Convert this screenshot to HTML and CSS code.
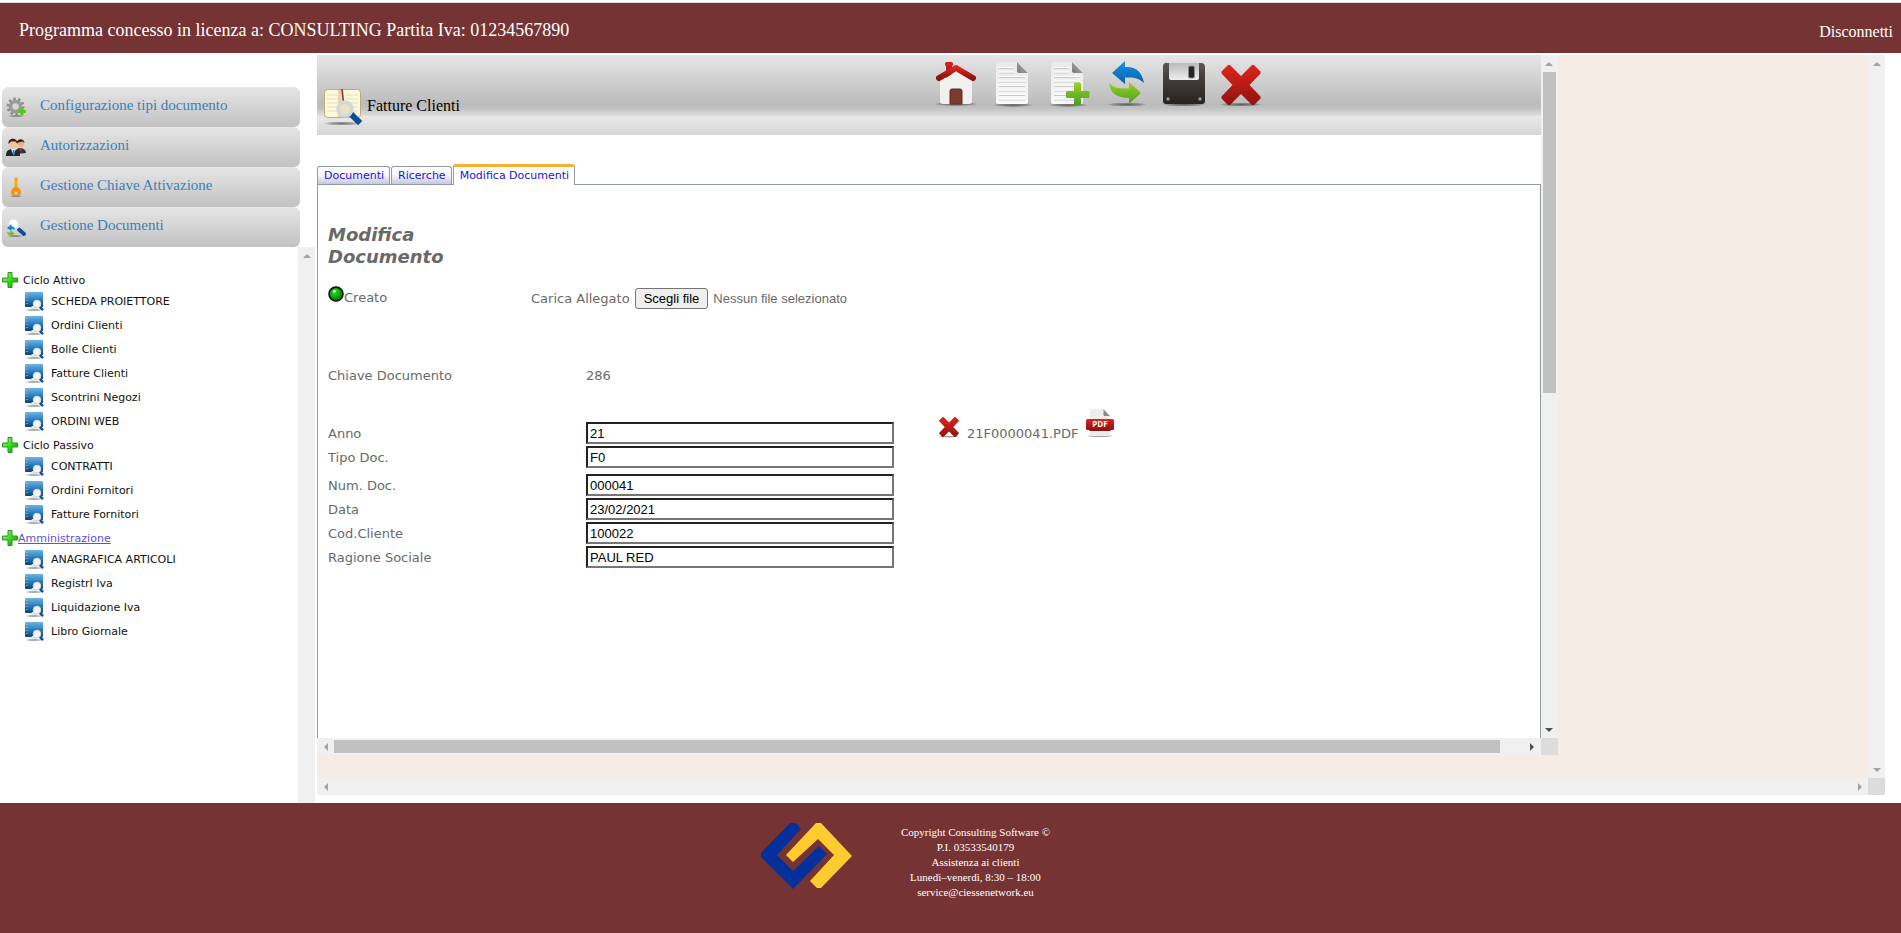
FILE: index.html
```html
<!DOCTYPE html>
<html lang="it">
<head>
<meta charset="utf-8">
<title>Fatture Clienti</title>
<link rel="stylesheet" href="styles.css">
</head>
<body>
<svg class="defs" width="0" height="0" aria-hidden="true">
  <defs>
    <linearGradient id="g-red" x1="0" y1="0" x2="0" y2="1"><stop offset="0" stop-color="#e0241c"/><stop offset="1" stop-color="#8c1410"/></linearGradient>
    <linearGradient id="g-redu" gradientUnits="userSpaceOnUse" x1="0" y1="4" x2="0" y2="40"><stop offset="0" stop-color="#e0281e"/><stop offset="1" stop-color="#841512"/></linearGradient>
    <linearGradient id="g-paper" x1="0" y1="0" x2="0" y2="1"><stop offset="0" stop-color="#e9e9e9"/><stop offset="1" stop-color="#f8f8f8"/></linearGradient>
    <linearGradient id="g-fold" x1="0" y1="1" x2="1" y2="0"><stop offset="0" stop-color="#777"/><stop offset="1" stop-color="#bbb"/></linearGradient>
    <linearGradient id="g-green" x1="0" y1="0" x2="0" y2="1"><stop offset="0" stop-color="#9bd31c"/><stop offset="1" stop-color="#4a9e2c"/></linearGradient>
    <linearGradient id="g-blue" x1="0" y1="0" x2="0" y2="1"><stop offset="0" stop-color="#1197e2"/><stop offset="1" stop-color="#0b5cab"/></linearGradient>
    <linearGradient id="g-screen" x1="0" y1="0" x2="0" y2="1"><stop offset="0" stop-color="#6db4e4"/><stop offset=".5" stop-color="#2b7fc0"/><stop offset="1" stop-color="#08407f"/></linearGradient>
    <linearGradient id="g-disk" x1="0" y1="0" x2="0" y2="1"><stop offset="0" stop-color="#5b5856"/><stop offset=".3" stop-color="#474341"/><stop offset="1" stop-color="#262220"/></linearGradient>
    <linearGradient id="g-label" x1="0" y1="0" x2="0" y2="1"><stop offset="0" stop-color="#b9b9b9"/><stop offset="1" stop-color="#efefef"/></linearGradient>
    <linearGradient id="g-plus" x1="0" y1="0" x2="1" y2="1"><stop offset="0" stop-color="#b6f4a0"/><stop offset=".5" stop-color="#38dc1c"/><stop offset="1" stop-color="#0a9a06"/></linearGradient>
    <radialGradient id="g-shadow"><stop offset="0" stop-color="#000" stop-opacity=".5"/><stop offset=".7" stop-color="#000" stop-opacity=".25"/><stop offset="1" stop-color="#000" stop-opacity="0"/></radialGradient>
    <radialGradient id="g-led" cx=".4" cy=".35"><stop offset="0" stop-color="#2fe02f"/><stop offset="1" stop-color="#029302"/></radialGradient>
  </defs>
  <symbol id="i-plus" viewBox="0 0 16 16"><path d="M6 .5h4V6h5.500v4H10v5.500H6V10H.5V6H6z" fill="url(#g-plus)" stroke="#2b9420"/></symbol>
  <symbol id="i-screen" viewBox="0 0 20 20">
    <ellipse cx="10" cy="19" rx="10" ry="1" fill="url(#g-shadow)"/>
    <rect x="1" y="1" width="18" height="15" rx="1" fill="url(#g-screen)"/>
    <path d="M3 3v11" stroke="#d8d090" stroke-dasharray="1 2"/>
    <path d="M8 15h5l1 3H6z" fill="#e4e4e4"/>
    <path d="M15.500 15.500l2.800 2.800" stroke="#0f4f9c" stroke-width="2.600" stroke-linecap="round"/>
    <circle cx="13" cy="13" r="3.800" fill="#f4f4f4" stroke="#d8d8d8"/>
  </symbol>
  <symbol id="i-cross" viewBox="0 0 44 46">
    <ellipse cx="22" cy="43.500" rx="22" ry="2" fill="url(#g-shadow)"/>
    <path d="M9 4h2l11 11L33 4h2l6.500 6.500v2L30.500 24l11 11.500v2L35 44h-2L22 33 11 44H9l-6.500-6.500v-2l11-11.500-11-11.500v-2z" fill="url(#g-red)"/>
  </symbol>
  <symbol id="i-page" viewBox="0 0 40 46">
    <ellipse cx="20" cy="44" rx="20" ry="2" fill="url(#g-shadow)"/>
    <path d="M5 1h20l10 11v29a2 2 0 0 1-2 2H5a2 2 0 0 1-2-2V3a2 2 0 0 1 2-2z" fill="url(#g-paper)"/>
    <path d="M24 1l11 11H26a2 2 0 0 1-2-2z" fill="url(#g-fold)"/>
    <path d="M6 7.500h15M6 12h15M6 16.500h26M6 21h26M6 25.500h26M6 30h26M6 34.500h26M6 39h26" stroke="#c9c9c9"/>
    <path d="M6 6.500h15M6 11h15M6 15.500h26M6 20h26M6 24.500h26M6 29h26M6 33.500h26M6 38h26" stroke="#fff"/>
  </symbol>
</svg>

<header class="top">
  <span class="top-licence">Programma concesso in licenza a: CONSULTING Partita Iva: 01234567890</span>
  <a class="top-logout" href="#">Disconnetti</a>
</header>

<div class="shell">
  <aside class="side">
    <nav class="menu">
      <a class="menu-item" href="#">
        <svg class="menu-icon" viewBox="0 0 20 20"><ellipse cx="10" cy="19" rx="9" ry="1" fill="url(#g-shadow)"/><circle cx="9.500" cy="9.500" r="7.500" fill="none" stroke="#8c8c8c" stroke-width="3" stroke-dasharray="2.400 2.310"/><circle cx="9.500" cy="9.500" r="5" fill="none" stroke="#999" stroke-width="3.500"/><path d="M12 14.500h8M16 10.500v8" stroke="#5cc41a" stroke-width="3"/></svg>
        <span>Configurazione tipi documento</span></a>
      <a class="menu-item" href="#">
        <svg class="menu-icon" viewBox="0 0 20 20"><path d="M10 17c0-4 1-6 4-6s6 2 6 5z" fill="#333"/><circle cx="14.500" cy="6.500" r="3.500" fill="#e9b68c"/><path d="M10.500 6c0-4 7.500-6 8 0l-2-1.500z" fill="#40210f"/><path d="M13.500 11h2.500l-1 4z" fill="#d22"/><path d="M0 19c0-5 2-7 7-7s7 2 7 7z" fill="#24262b"/><path d="M5 12h5l-2.500 6z" fill="#e8f2fa"/><path d="M7 13h1.500l.5 4-1 1-1.200-1z" fill="#1b8ad4"/><circle cx="7" cy="7.500" r="4" fill="#f2c49b"/><path d="M2.500 7c-1-7 9.500-7 9 0l-2-2.500H5z" fill="#40210f"/></svg>
        <span>Autorizzazioni</span></a>
      <a class="menu-item" href="#">
        <svg class="menu-icon" viewBox="0 0 20 20"><ellipse cx="10" cy="19" rx="7" ry="1" fill="url(#g-shadow)"/><path d="M8.500 1L10 0l1.500 1v10h-3z" fill="#f7a81c"/><path d="M10 10c3 0 5 3 5 5.500S13 19 10 19s-5-1-5-3.500S7 10 10 10z" fill="#f39016"/><circle cx="10" cy="16" r="1.500" fill="#e9dcc8"/></svg>
        <span>Gestione Chiave Attivazione</span></a>
      <a class="menu-item" href="#">
        <svg class="menu-icon" viewBox="0 0 20 20"><ellipse cx="9" cy="19" rx="9" ry="1" fill="url(#g-shadow)"/><path d="M13 12.500l5 4.500" stroke="#0f4f9c" stroke-width="3.800" stroke-linecap="round"/><circle cx="7.500" cy="7" r="5.500" fill="#fff" stroke="#dedede" stroke-width="2"/><path d="M1 11l4.500-4v2.500C8 9.500 9 11 9 13c-1-1-2-1-3.500-1v2z" fill="#1583cf"/><path d="M8.500 16.500L4.500 20v-2C2 18 1 17 1 14.500c1 1 2 1 3.500 1v-2z" fill="#6fbd2b"/></svg>
        <span>Gestione Documenti</span></a>
    </nav>
    <div class="tree-wrap">
      <ul class="tree">
        <li class="tree-group"><svg class="tree-plus"><use href="#i-plus"/></svg><span class="tree-title">Ciclo Attivo</span></li>
        <li class="tree-leaf"><svg class="tree-icon"><use href="#i-screen"/></svg>SCHEDA PROIETTORE</li>
        <li class="tree-leaf"><svg class="tree-icon"><use href="#i-screen"/></svg>Ordini Clienti</li>
        <li class="tree-leaf"><svg class="tree-icon"><use href="#i-screen"/></svg>Bolle Clienti</li>
        <li class="tree-leaf"><svg class="tree-icon"><use href="#i-screen"/></svg>Fatture Clienti</li>
        <li class="tree-leaf"><svg class="tree-icon"><use href="#i-screen"/></svg>Scontrini Negozi</li>
        <li class="tree-leaf"><svg class="tree-icon"><use href="#i-screen"/></svg>ORDINI WEB</li>
        <li class="tree-group"><svg class="tree-plus"><use href="#i-plus"/></svg><span class="tree-title">Ciclo Passivo</span></li>
        <li class="tree-leaf"><svg class="tree-icon"><use href="#i-screen"/></svg>CONTRATTI</li>
        <li class="tree-leaf"><svg class="tree-icon"><use href="#i-screen"/></svg>Ordini Fornitori</li>
        <li class="tree-leaf"><svg class="tree-icon"><use href="#i-screen"/></svg>Fatture Fornitori</li>
        <li class="tree-group"><svg class="tree-plus"><use href="#i-plus"/></svg><a class="tree-link" href="#">Amministrazione</a></li>
        <li class="tree-leaf"><svg class="tree-icon"><use href="#i-screen"/></svg>ANAGRAFICA ARTICOLI</li>
        <li class="tree-leaf"><svg class="tree-icon"><use href="#i-screen"/></svg>RegistrI Iva</li>
        <li class="tree-leaf"><svg class="tree-icon"><use href="#i-screen"/></svg>Liquidazione Iva</li>
        <li class="tree-leaf"><svg class="tree-icon"><use href="#i-screen"/></svg>Libro Giornale</li>
      </ul>
      <div class="bar-v"><span class="arrow up"></span></div>
    </div>
  </aside>

  <main class="outer">
    <div class="outer-view">
      <section class="inner">
        <div class="page">
          <div class="toolbar">
            <div class="toolbar-title">
              <svg class="title-icon" viewBox="0 0 40 38"><ellipse cx="19" cy="35.500" rx="19" ry="2" fill="url(#g-shadow)"/><rect x="1.500" y="1.500" width="36" height="28" rx="3" fill="#fbf8dc" stroke="#b9ac7c"/><path d="M15 2h5v27h-5z" fill="#ddd8bc"/><path d="M4 7h11M4 11h11M4 15h11M4 19h9M4 23h10M23 7h12M23 11h12M27 15h8M30 19h5M30 23h5" stroke="#e6e0bd"/><path d="M19 1l1.500 13" stroke="#b02a20" stroke-width="1.600"/><path d="M30 28l5 5" stroke="#0d4c97" stroke-width="6" stroke-linecap="square"/><circle cx="22" cy="21" r="7" fill="#e6e2c4" stroke="#d6d6d6" stroke-width="3.500"/></svg>
              <span>Fatture Clienti</span>
            </div>
            <div class="tools">
              <button class="tool" aria-label="Home"><svg viewBox="0 0 44 46"><ellipse cx="22" cy="43" rx="22" ry="2.200" fill="url(#g-shadow)"/><path d="M6 20L22 9l16 11v20a3 3 0 0 1-3 3H9a3 3 0 0 1-3-3z" fill="#f1f0ef"/><path d="M16 43V30a2 2 0 0 1 2-2h8a2 2 0 0 1 2 2v13z" fill="#7a3a30" stroke="#5a2c26"/><path d="M12 4h6v9l-6 4z" fill="#b81d18"/><rect x="11" y="1" width="8" height="4" rx="1.500" fill="#d2231d"/><path d="M5 17L22 7l17 10" fill="none" stroke="url(#g-red)" stroke-width="6" stroke-linecap="round" stroke-linejoin="round"/></svg></button>
              <button class="tool" aria-label="Documento"><svg viewBox="0 0 40 46"><use href="#i-page"/></svg></button>
              <button class="tool" aria-label="Nuovo documento"><svg viewBox="0 0 44 46"><use href="#i-page" width="40" height="46"/><path d="M26 23a1.500 1.500 0 0 1 1.500-1.500h4A1.500 1.500 0 0 1 33 23v7h7a1.500 1.500 0 0 1 1.500 1.500v4A1.500 1.500 0 0 1 40 37h-7v5.500a1.500 1.500 0 0 1-1.500 1.500h-4a1.500 1.500 0 0 1-1.500-1.500V37h-6.500a1.500 1.500 0 0 1-1.500-1.500v-4a1.500 1.500 0 0 1 1.500-1.500H26z" fill="url(#g-green)"/></svg></button>
              <button class="tool" aria-label="Aggiorna"><svg viewBox="0 0 44 46"><ellipse cx="22" cy="43.500" rx="20" ry="2" fill="url(#g-shadow)"/><path d="M7 12L20 0v6c10-1 17 4 19 16-5-5-10-6-19-5.500V23z" fill="url(#g-blue)"/><path d="M36 32L24 43v-6C12 37 5 32 4 22c5 5 11 6 20 5.500V21z" fill="url(#g-green)"/></svg></button>
              <button class="tool" aria-label="Salva"><svg viewBox="0 0 44 46"><ellipse cx="22" cy="43.500" rx="22" ry="2" fill="url(#g-shadow)"/><path d="M5 2h34a4 4 0 0 1 4 4v34a3 3 0 0 1-3 3H4a3 3 0 0 1-3-3V5a3 3 0 0 1 4-3z" fill="url(#g-disk)"/><path d="M7 2h30v15a2 2 0 0 1-2 2H9a2 2 0 0 1-2-2z" fill="url(#g-label)"/><rect x="26.500" y="5" width="6" height="12" rx="1.500" fill="#292522" stroke="#8d8d8d"/><circle cx="6" cy="38" r="1.700" fill="#9a9796"/><circle cx="38" cy="38" r="1.700" fill="#9a9796"/></svg></button>
              <button class="tool" aria-label="Elimina"><svg viewBox="0 0 44 46"><use href="#i-cross"/></svg></button>
            </div>
          </div>

          <nav class="tabs">
            <a class="tab" href="#">Documenti</a>
            <a class="tab" href="#">Ricerche</a>
            <a class="tab tab-active" href="#">Modifica Documenti</a>
          </nav>

          <form class="sheet">
            <h1 class="sheet-title">Modifica Documento</h1>
            <div class="status-row">
              <span class="status"><svg class="led" viewBox="0 0 15 15"><circle cx="7.500" cy="7.500" r="6.500" fill="url(#g-led)" stroke="#061806" stroke-width="1.600"/><circle cx="6" cy="5" r="1.200" fill="#e8ffd8"/></svg>Creato</span>
              <span class="upload">
                <label for="allegato">Carica Allegato</label>
                <input class="upload-input" type="file" id="allegato" tabindex="-1">
                <button class="upload-button" type="button">Scegli file</button>
                <span class="upload-name">Nessun file selezionato</span>
              </span>
            </div>
            <div class="row row-key"><span>Chiave Documento</span><span>286</span></div>
            <div class="fields">
              <div class="row">
                <label for="anno">Anno</label><input class="field" id="anno" value="21">
                <span class="attachment">
                  <button class="attachment-remove" type="button" aria-label="Rimuovi allegato"><svg viewBox="0 0 44 46"><use href="#i-cross"/></svg></button>
                  <span>21F0000041.PDF</span>
                  <svg class="attachment-pdf" viewBox="0 0 30 30"><ellipse cx="15" cy="28" rx="14" ry="1.500" fill="url(#g-shadow)"/><path d="M5 1h14l6 7v19a1 1 0 0 1-1 1H6a1 1 0 0 1-1-1z" fill="#ededed"/><path d="M18.500 1L25 8h-5a1.500 1.500 0 0 1-1.500-1.500z" fill="url(#g-fold)"/><path d="M3 21h24l-2 2H5z" fill="#8a1512"/><rect x="1" y="11" width="28" height="11" rx="1.500" fill="url(#g-red)"/><text class="pdf-text" x="15" y="19" text-anchor="middle">PDF</text></svg>
                </span>
              </div>
              <div class="row"><label for="tipo">Tipo Doc.</label><input class="field" id="tipo" value="F0"></div>
              <div class="row row-spaced"><label for="num">Num. Doc.</label><input class="field" id="num" value="000041"></div>
              <div class="row"><label for="data">Data</label><input class="field" id="data" value="23/02/2021"></div>
              <div class="row"><label for="cod">Cod.Cliente</label><input class="field" id="cod" value="100022"></div>
              <div class="row"><label for="ragione">Ragione Sociale</label><input class="field" id="ragione" value="PAUL RED"></div>
            </div>
          </form>
        </div>
        <div class="bar-v"><span class="arrow up"></span><span class="track-v"><span class="thumb-v"></span></span><span class="arrow down dark"></span></div>
        <div class="bar-h"><span class="arrow left"></span><span class="track-h"><span class="thumb-h"></span></span><span class="arrow right dark"></span></div>
        <div class="corner"></div>
      </section>
    </div>
    <div class="bar-v"><span class="arrow up"></span><span class="track-v"></span><span class="arrow down"></span></div>
    <div class="bar-h"><span class="arrow left"></span><span class="track-h"></span><span class="arrow right"></span></div>
    <div class="corner"></div>
  </main>
</div>

<footer class="foot">
  <svg class="logo" viewBox="0 0 91 66"><path d="M29 0h6l5 6-24 26 16 16 26-25 8 8-34 35L0 34v-4z" fill="#03309a"/><path d="M55 0h5l31 33-31 32h-4l-7-7 24-26-16-16-25 23-7-7z" fill="#ffcb2f"/></svg>
  <p class="foot-text">Copyright Consulting Software ©<br>P.I. 03533540179<br>Assistenza ai clienti<br>Lunedì–venerdì, 8:30 – 18:00<br>service@ciessenetwork.eu</p>
</footer>
</body>
</html>
```
FILE: styles.css
```css
* { box-sizing: border-box; }

body {
  margin: 0;
  min-height: 100vh;
  display: flex;
  flex-direction: column;
  background: #fff;
  color: #000;
  font-family: "Liberation Serif", "Times New Roman", serif;
  font-size: 16px;
}

a { text-decoration: none; }
button { padding: 0; border: 0; background: none; }
.defs { display: block; position: absolute; }

/* Header */
.top {
  display: flex;
  justify-content: space-between;
  align-items: center;
  height: 51px;
  margin-top: 2px;
  padding: 5px 8px 0 19px;
  border-top: 1px solid #dcdcdc;
  background: #763334;
  color: #fff;
}
.top-licence { font-size: 18px; }
.top-logout { color: #fff; font-size: 16px; padding-top: 2px; }

.shell { flex: 1; display: flex; }

/* Sidebar */
.side {
  width: 317px;
  flex: none;
  display: flex;
  flex-direction: column;
  padding: 34px 2px 0;
}
.menu { width: 298px; }
.menu-item {
  display: flex;
  align-items: center;
  height: 40px;
  padding-left: 4px;
  gap: 14px;
  border-radius: 6px;
  background: linear-gradient(#e6e6e6, #c2c2c2);
  color: #3c7fb8;
  font-size: 15px;
}
.menu-item span { padding-bottom: 3px; }
.menu-icon { width: 20px; height: 20px; flex: none; }

.tree-wrap { flex: 1; display: flex; justify-content: space-between; }
.tree {
  margin: 0;
  padding: 21px 0 0;
  list-style: none;
  font-family: "DejaVu Sans", Verdana, sans-serif;
  font-size: 11px;
  color: #111;
}
.tree-group { display: flex; align-items: center; height: 21px; padding-top: 3px; }
.tree-plus { width: 16px; height: 16px; flex: none; }
.tree-title { padding-left: 5px; }
.tree-link { color: #5a50e0; text-decoration: underline; }
.tree-leaf { display: flex; align-items: center; height: 24px; gap: 7px; padding-left: 22px; }
.tree-icon { width: 20px; height: 20px; flex: none; }

/* Scrollbars */
.bar-v {
  width: 17px;
  flex: none;
  display: flex;
  flex-direction: column;
  align-items: center;
  background: #f0f0f0;
}
.bar-h { height: 17px; display: flex; align-items: center; background: #f0f0f0; }
.corner { background: #dcdcdc; }
.track-v { flex: 1; width: 13px; }
.track-h { flex: 1; height: 13px; }
.thumb-v { display: block; height: 49.5%; background: #c1c1c1; }
.thumb-h { display: block; width: 98%; height: 100%; background: #c1c1c1; }
.arrow { width: 17px; height: 17px; flex: none; display: grid; place-items: center; color: #a3a3a3; }
.arrow::before { content: ""; border: 4px solid transparent; }
.arrow.up::before { border-top: 0; border-bottom-color: currentColor; }
.arrow.down::before { border-bottom: 0; border-top-color: currentColor; }
.arrow.left::before { border-left: 0; border-right-color: currentColor; }
.arrow.right::before { border-right: 0; border-left-color: currentColor; }
.arrow.dark { color: #505050; }

/* Content frames */
.outer, .inner {
  display: grid;
  grid-template-columns: 1fr 17px;
  grid-template-rows: 1fr 17px;
}
.outer { flex: 1; margin: 2px 16px 8px 0; }
.outer-view { background: #f5ece6; padding-bottom: 23px; display: flex; }
.inner { width: 80%; background: #fff; }
.page { display: flex; flex-direction: column; }

.toolbar {
  display: grid;
  grid-template-columns: 1fr 1fr;
  height: 80px;
  background: linear-gradient(#e6e6e6, #bbbbbb 62%, #c0c0c0 66%, #dedede 76%, #e8e8e8 77%, #d6d6d6);
}
.toolbar-title { display: flex; align-items: center; gap: 4px; padding: 24px 0 0 6px; }
.toolbar-title span { padding-bottom: 2px; }
.title-icon { width: 40px; height: 38px; }
.tools { display: flex; gap: 13px; padding: 6px 0 0 5px; }
.tool { width: 44px; height: 46px; }
.tool svg { display: block; width: 100%; height: 100%; }

.tabs {
  display: flex;
  align-items: flex-end;
  gap: 1px;
  margin-top: 29px;
  font-family: "DejaVu Sans", Verdana, sans-serif;
  font-size: 11px;
}
.tab {
  height: 18px;
  padding: 0 5px 0 6px;
  border: 1px solid #919b9c;
  border-bottom: 0;
  border-radius: 3px 3px 0 0;
  background: linear-gradient(#fff, #f4f4fc 50%, #c6c6e2);
  color: #1c10e8;
  line-height: 17px;
}
.tab-active {
  height: 21px;
  margin-bottom: -1px;
  border-top: 3px solid #f8b030;
  background: #fff;
  z-index: 1;
}

/* Document form */
.sheet {
  flex: 1;
  padding: 39px 10px 0;
  border: 1px solid #919b9c;
  border-bottom: 0;
  color: #696969;
  font-family: "DejaVu Sans", Verdana, sans-serif;
  font-size: 13px;
}
.sheet-title { width: 150px; margin: 0 0 18px; font-size: 18px; line-height: 22px; font-style: italic; }
.status-row { display: flex; height: 24px; }
.status { width: 203px; line-height: 24px; display: flex; }
.led { width: 16px; height: 16px; }
.upload { display: flex; align-items: center; gap: 5px; }
.upload-input { position: absolute; width: 1px; height: 1px; opacity: 0; }
.upload-button {
  height: 21px;
  padding: 0 8px;
  border: 1px solid #767676;
  border-radius: 3px;
  background: #efefef;
  color: #000;
}
.upload-button, .upload-name { font-family: "Liberation Sans", Arial, sans-serif; font-size: 13px; }

.row {
  display: grid;
  grid-template-columns: 258px 308px auto;
  grid-template-rows: 22px;
  align-items: center;
}
.row-key { margin: 54px 0 36px; }
.fields { display: grid; gap: 2px; }
.row-spaced { margin-top: 4px; }
.field {
  width: 308px;
  height: 22px;
  padding: 0 2px;
  border: 2px solid;
  border-color: #222 #767676 #767676 #222;
  background: #fff;
  color: #000;
  font-family: "Liberation Sans", Arial, sans-serif;
  font-size: 13px;
}
.attachment { display: flex; align-items: center; gap: 7px; height: 22px; padding-left: 44px; }
.attachment-remove { width: 22px; height: 23px; margin-bottom: 14px; }
.attachment-remove svg { display: block; width: 22px; height: 23px; }
.attachment-pdf { width: 30px; height: 30px; margin-bottom: 20px; }
.pdf-text { font-family: "Open Sans", sans-serif; font-size: 8px; font-weight: bold; fill: #fff; }

/* Footer */
.foot {
  display: flex;
  justify-content: center;
  align-items: flex-start;
  gap: 49px;
  height: 130px;
  padding: 20px 90px 0 0;
  background: #763334;
  color: #fff;
}
.logo { width: 91px; height: 66px; }
.foot-text { margin: 0; padding-top: 2px; font-size: 11px; line-height: 15px; text-align: center; }
```
